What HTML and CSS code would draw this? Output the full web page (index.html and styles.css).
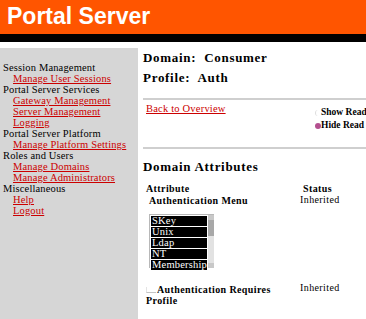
FILE: index.html
```html
<!DOCTYPE html>
<html lang="en">

<head>
    <meta charset="UTF-8">
    <title>Portal Server</title>
    <link rel="stylesheet" href="styles.css">
</head>

<body>
    <header class="banner">
        <h1 class="brand">Portal Server</h1>
    </header>
    <div class="banner-rule"></div>

    <div class="layout">
        <nav class="sidebar">
            <div class="group">Session Management</div>
            <a class="link" href="#">Manage User Sessions</a>
            <div class="group">Portal Server Services</div>
            <a class="link" href="#">Gateway Management</a>
            <a class="link" href="#">Server Management</a>
            <a class="link" href="#">Logging</a>
            <div class="group">Portal Server Platform</div>
            <a class="link" href="#">Manage Platform Settings</a>
            <div class="group">Roles and Users</div>
            <a class="link" href="#">Manage Domains</a>
            <a class="link" href="#">Manage Administrators</a>
            <div class="group">Miscellaneous</div>
            <a class="link" href="#">Help</a>
            <a class="link" href="#">Logout</a>
        </nav>

        <main class="content">
            <div class="title">Domain:&nbsp; Consumer</div>
            <div class="title">Profile:&nbsp; Auth</div>
            <hr class="divider top-divider">

            <section class="actions">
                <a class="back" href="#">Back to Overview</a>
                <div class="view-opts">
                    <div class="opt"><span class="radio"></span>Show Read</div>
                    <div class="opt"><span class="radio on"></span>Hide Read</div>
                </div>
            </section>

            <hr class="divider">

            <div class="title section-title">Domain Attributes</div>

            <section class="attrs">
                <div class="head">Attribute</div>
                <div class="head status-head">Status</div>

                <div class="attr-cell">
                    <div class="attr-name">Authentication Menu</div>
                    <div class="listbox">
                        <div class="options">
                            <div class="option">SKey</div>
                            <div class="option">Unix</div>
                            <div class="option">Ldap</div>
                            <div class="option">NT</div>
                            <div class="option">Membership</div>
                        </div>
                        <div class="scrollbar">
                            <span class="arrow up"></span>
                            <span class="thumb"></span>
                            <span class="arrow down"></span>
                        </div>
                    </div>
                </div>
                <div class="status">Inherited</div>

                <div class="attr-cell second">
                    <div class="attr-name wrap"><span class="check"></span>Authentication Requires Profile</div>
                </div>
                <div class="status second">Inherited</div>
            </section>
        </main>
    </div>
</body>

</html>
```

FILE: styles.css
```css
html,
body {
    margin: 0;
    height: 100%;
    overflow: hidden;
    background: #fff;
    font-family: "Liberation Serif", "Times New Roman", serif;
}

.banner {
    background: #ff5500;
    height: 34px;
}

.brand {
    margin: 0;
    padding-left: 7px;
    font-family: "Liberation Sans", Arial, sans-serif;
    font-size: 23px;
    line-height: 33px;
    font-weight: bold;
    color: #fff;
}

.banner-rule {
    background: #000;
    height: 8px;
    margin-bottom: 6px;
}

.layout {
    display: grid;
    grid-template-columns: 138px 1fr;
    column-gap: 5px;
    height: calc(100% - 48px);
}

/* left menu */
.sidebar {
    background: #d6d6d6;
    padding: 14px 0 0 3px;
    display: flex;
    flex-direction: column;
    align-items: flex-start;
    font-size: 10.5px;
    line-height: 11px;
    letter-spacing: 0.15px;
}

.group {
    color: #000;
}

.link {
    color: #cc0000;
    margin-left: 10px;
}

/* main */
.content {
    min-width: 0;
}

.title {
    font-size: 13px;
    line-height: 20px;
    font-weight: bold;
    letter-spacing: 0.7px;
    color: #000;
}

.divider {
    border: 0;
    height: 2px;
    background: #cfcfcf;
    margin: 0;
}

.top-divider {
    margin-top: 10px;
}

.actions {
    display: flex;
    align-items: flex-start;
    height: 47px;
}

.back {
    width: 169px;
    margin: 2px 0 0 3px;
    font-size: 10.5px;
    line-height: 13px;
    letter-spacing: 0.2px;
    color: #cc0000;
    flex-shrink: 0;
}

.view-opts {
    margin-top: 6px;
    font-size: 9.5px;
    line-height: 13px;
    font-weight: bold;
    white-space: nowrap;
}

.opt {
    display: flex;
    align-items: center;
}

.radio {
    width: 6px;
    height: 6px;
    border-radius: 50%;
    flex-shrink: 0;
    box-sizing: border-box;
    border-left: 1px solid #ddd;
}

.radio.on {
    background: #b4508f;
    border: 0;
}

.section-title {
    margin-top: 8px;
}

.attrs {
    display: grid;
    grid-template-columns: 154px 1fr;
    margin: 6px 0 0 3px;
    font-size: 10px;
    line-height: 12px;
    letter-spacing: 0.4px;
}

.head {
    font-weight: bold;
}

.status-head {
    padding-left: 3px;
}

.attr-cell {
    padding-left: 3px;
}

.attr-name {
    font-weight: bold;
}

.status {
    margin-top: -1px;
}

.listbox {
    display: flex;
    width: 65px;
    height: 54px;
    margin-top: 7px;
    box-sizing: border-box;
    border-top: 1px solid #b8b8b8;
    border-left: 1px solid #b8b8b8;
}

.options {
    flex: 1;
    padding: 1px 1px 0 1px;
}

.option {
    background: #000;
    color: #fff;
    height: 10px;
    line-height: 10px;
    margin-bottom: 1px;
    padding-left: 1px;
    letter-spacing: 0.2px;
    font-size: 10.5px;
    white-space: nowrap;
    overflow: hidden;
}

.scrollbar {
    width: 7px;
    background: #e2e2e2;
    display: flex;
    flex-direction: column;
}

.arrow {
    height: 5px;
    background: #c8c8c8;
}

.thumb {
    height: 16px;
    background: #a8a8a8;
}

.arrow.down {
    margin-top: auto;
}

.second {
    margin-top: 17px;
}

.wrap {
    width: 150px;
    margin-left: -3px;
    line-height: 10.5px;
}

.check {
    display: inline-block;
    width: 9px;
    height: 5px;
    margin-right: 1px;
    border-bottom: 1px solid #c4c4c4;
    border-left: 1px solid #e4e4e4;
}

.status.second {
    margin-top: 14px;
}
```
